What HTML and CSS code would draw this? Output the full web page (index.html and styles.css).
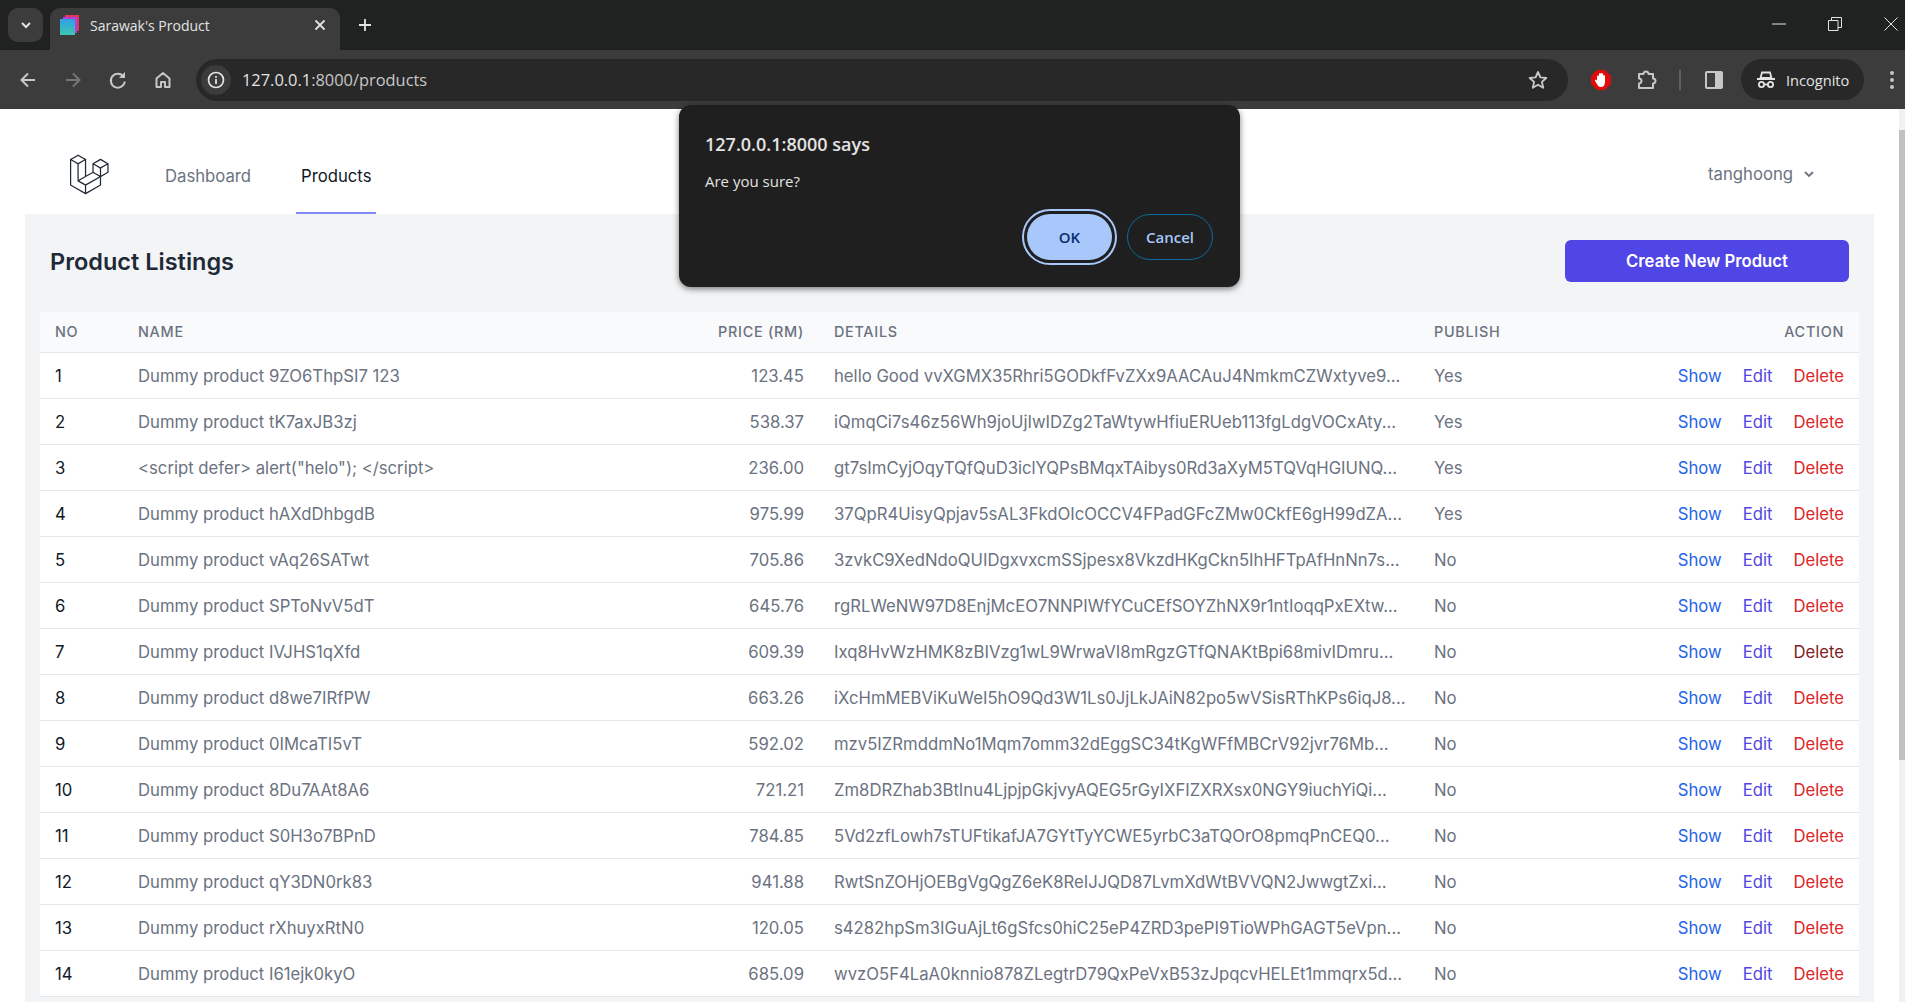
FILE: index.html
```html
<!DOCTYPE html>
<html lang="en">
<head>
    <meta charset="UTF-8">
    <meta name="viewport" content="width=device-width, initial-scale=1.0">
    <title>Sarawak's Product</title>
    <link rel="stylesheet" href="styles.css">
</head>
<body>

<div class="tabstrip">
    <div class="tab-search">
        <svg width="14" height="14" viewBox="0 0 14 14"><path d="M3 5l4 4 4-4" fill="none" stroke="#e3e3e3" stroke-width="2"/></svg>
    </div>
    <div class="tab">
        <svg class="favicon" width="20" height="20" viewBox="0 0 20 20">
            <defs><linearGradient id="favfront" x1="0" y1="0" x2="0" y2="1"><stop offset="0" stop-color="#2f9fe8"/><stop offset="1" stop-color="#3cc8b0"/></linearGradient></defs>
            <rect x="5" y="0" width="14" height="16" fill="#e0355f"/>
            <rect x="3" y="2" width="14" height="16" fill="#b43fd6"/>
            <rect x="0" y="4" width="15" height="16" fill="url(#favfront)"/>
        </svg>
        <span class="tab-title">Sarawak's Product</span>
        <svg class="tab-close" width="12" height="12" viewBox="0 0 12 12"><path d="M1.5 1.5l9 9M10.5 1.5l-9 9" stroke="#e3e3e3" stroke-width="1.8"/></svg>
    </div>
    <svg class="new-tab" width="14" height="14" viewBox="0 0 14 14"><path d="M7 1v12M1 7h12" stroke="#e3e3e3" stroke-width="1.8"/></svg>
    <div class="window-controls">
        <svg width="14" height="14" viewBox="0 0 14 14"><path d="M0 7h14" stroke="#e3e3e3"/></svg>
        <svg width="14" height="14" viewBox="0 0 14 14"><path d="M.5 3.5h9.5v10H.5zM3.5 3.5v-3h10v10h-3.5" fill="none" stroke="#e3e3e3"/></svg>
        <svg width="14" height="14" viewBox="0 0 14 14"><path d="M.5.5l13 13M13.5.5l-13 13" stroke="#e3e3e3"/></svg>
    </div>
</div>

<div class="toolbar">
    <svg class="tool" width="20" height="20" viewBox="0 0 20 20"><path d="M17 10H4M10 3.500l-6.500 6.500 6.500 6.500" fill="none" stroke="#c7c7c7" stroke-width="2"/></svg>
    <svg class="tool" width="20" height="20" viewBox="0 0 20 20"><path d="M3 10h13M10 3.500l6.500 6.500-6.500 6.500" fill="none" stroke="#757575" stroke-width="2"/></svg>
    <svg class="tool" width="20" height="20" viewBox="0 0 20 20"><path d="M15.500 6.500a7 7 0 1 0 1.300 5" fill="none" stroke="#c7c7c7" stroke-width="2"/><path d="M17 2v6h-6z" fill="#c7c7c7"/></svg>
    <svg class="tool" width="20" height="20" viewBox="0 0 20 20"><path d="M10 3L3.500 8.500V17h4.500v-5h4v5h4.500V8.500z" fill="none" stroke="#c7c7c7" stroke-width="2" stroke-linejoin="round"/></svg>
    <div class="omnibox">
        <div class="site-info">
            <svg width="18" height="18" viewBox="0 0 18 18"><circle cx="9" cy="9" r="7.500" fill="none" stroke="#e3e3e3" stroke-width="1.700"/><path d="M9 8v5M9 5v1.700" stroke="#e3e3e3" stroke-width="1.800"/></svg>
        </div>
        <span class="url"><span class="url-host">127.0.0.1</span>:8000/products</span>
        <svg class="star" width="22" height="22" viewBox="0 0 22 22"><path d="M11 3l2.400 5.400 5.900.6-4.400 3.900 1.300 5.800L11 15.700l-5.200 3 1.300-5.800L2.700 9l5.900-.6z" fill="none" stroke="#c7c7c7" stroke-width="1.900" stroke-linejoin="round"/></svg>
    </div>
    <svg class="adblock" width="22" height="22" viewBox="0 0 22 22">
        <path d="M7 1h8l6 6v8l-6 6H7l-6-6V7z" fill="#e00b0b"/>
        <path d="M7 11V7.500a1 1 0 0 1 2 0V5a1 1 0 0 1 2 0v0a1 1 0 0 1 2 0v2a1 1 0 0 1 2 0v6c0 3-1.500 5-4 5s-3-1-4-3l-2-3c-.5-1 1-1.800 2-.5z" fill="#fff"/>
    </svg>
    <svg class="puzzle" width="24" height="24" viewBox="0 0 24 24"><path d="M4 6h4.500a2.500 2.500 0 0 1 5 0H18v4.500a2.500 2.500 0 0 1 0 5V20H4v-4.500a2 2 0 0 0 0-5z" fill="none" stroke="#c7c7c7" stroke-width="2" stroke-linejoin="round"/></svg>
    <span class="tool-sep"></span>
    <svg class="panel" width="18" height="18" viewBox="0 0 18 18"><rect width="18" height="18" rx="2" fill="#c7c7c7"/><rect x="2" y="2" width="8" height="14" fill="#3c3c3c"/></svg>
    <div class="incognito">
        <svg width="20" height="20" viewBox="0 0 20 20"><path d="M6 2.500h8l1.500 5.500h-11zM1 9h18" fill="none" stroke="#e3e3e3" stroke-width="1.800"/><circle cx="5.500" cy="14.500" r="2.600" fill="none" stroke="#e3e3e3" stroke-width="1.800"/><circle cx="14.500" cy="14.500" r="2.600" fill="none" stroke="#e3e3e3" stroke-width="1.800"/><path d="M8 14.500h4" stroke="#e3e3e3" stroke-width="1.800"/></svg>
        <span>Incognito</span>
    </div>
    <svg class="menu-dots" width="6" height="20" viewBox="0 0 6 20"><circle cx="3" cy="3" r="2" fill="#c7c7c7"/><circle cx="3" cy="10" r="2" fill="#c7c7c7"/><circle cx="3" cy="17" r="2" fill="#c7c7c7"/></svg>
</div>

<div class="viewport">
    <div class="page">
        <nav class="nav">
            <svg class="logo" width="45" height="45" viewBox="0 0 316 316" fill="#1f2937"><path d="M305.8 81.125C305.77 80.995 305.69 80.885 305.65 80.755C305.56 80.525 305.49 80.285 305.37 80.075C305.29 79.935 305.17 79.815 305.07 79.685C304.94 79.515 304.83 79.325 304.68 79.175C304.55 79.045 304.39 78.955 304.25 78.845C304.09 78.715 303.95 78.575 303.77 78.475L251.32 48.275C249.97 47.495 248.31 47.495 246.96 48.275L194.51 78.475C194.33 78.575 194.19 78.725 194.03 78.845C193.89 78.955 193.73 79.045 193.6 79.175C193.45 79.325 193.34 79.515 193.21 79.685C193.11 79.815 192.99 79.935 192.91 80.075C192.79 80.285 192.71 80.525 192.63 80.755C192.58 80.875 192.51 80.995 192.48 81.125C192.38 81.495 192.33 81.875 192.33 82.265V139.625L148.62 164.795V52.575C148.62 52.185 148.57 51.805 148.47 51.435C148.44 51.305 148.36 51.195 148.32 51.065C148.23 50.835 148.16 50.595 148.04 50.385C147.96 50.245 147.84 50.125 147.74 49.995C147.61 49.825 147.5 49.635 147.35 49.485C147.22 49.355 147.06 49.265 146.92 49.155C146.76 49.025 146.62 48.885 146.44 48.785L93.99 18.585C92.64 17.805 90.98 17.805 89.63 18.585L37.18 48.785C37 48.885 36.86 49.035 36.7 49.155C36.56 49.265 36.4 49.355 36.27 49.485C36.12 49.635 36.01 49.825 35.88 49.995C35.78 50.125 35.66 50.245 35.58 50.385C35.46 50.595 35.38 50.835 35.3 51.065C35.25 51.185 35.18 51.305 35.15 51.435C35.05 51.805 35 52.185 35 52.575V232.235C35 233.795 35.84 235.245 37.19 236.025L142.1 296.425C142.33 296.555 142.58 296.635 142.83 296.725C142.95 296.765 143.06 296.835 143.18 296.865C143.55 296.965 143.93 297.015 144.31 297.015C144.69 297.015 145.07 296.965 145.44 296.865C145.55 296.835 145.65 296.775 145.76 296.735C146.02 296.645 146.28 296.565 146.52 296.425L251.43 236.025C252.79 235.245 253.62 233.805 253.62 232.235V174.875L303.86 145.945C305.22 145.165 306.05 143.725 306.05 142.155V82.265C305.95 81.875 305.89 81.495 305.8 81.125ZM144.2 227.205L100.57 202.515L146.39 176.135L196.66 147.195L240.33 172.335L208.29 190.625L144.2 227.205ZM244.75 114.995V164.795L226.39 154.225L201.03 139.625V89.825L219.39 100.395L244.75 114.995ZM249.12 57.105L292.81 82.265L249.12 107.425L205.43 82.265L249.12 57.105ZM114.49 184.425L96.13 194.995V85.305L121.49 70.705L139.85 60.135V169.815L114.49 184.425ZM91.76 27.425L135.45 52.585L91.76 77.745L48.07 52.585L91.76 27.425ZM43.67 60.135L62.03 70.705L87.39 85.305V202.545V202.555V202.565C87.39 202.735 87.44 202.895 87.46 203.055C87.49 203.265 87.49 203.485 87.55 203.695V203.705C87.6 203.875 87.69 204.035 87.76 204.195C87.84 204.375 87.89 204.575 87.99 204.745C87.99 204.745 87.99 204.755 88 204.755C88.09 204.905 88.22 205.035 88.33 205.175C88.45 205.335 88.55 205.495 88.69 205.635L88.7 205.645C88.82 205.765 88.98 205.855 89.12 205.965C89.28 206.085 89.42 206.225 89.59 206.325C89.6 206.325 89.6 206.325 89.61 206.335C89.62 206.335 89.62 206.345 89.63 206.345L139.87 234.775V285.065L43.67 229.705V60.135ZM244.75 229.705L148.58 285.075V234.775L219.8 194.115L244.75 179.875V229.705ZM297.2 139.625L253.49 164.795V114.995L278.85 100.395L297.21 89.825V139.625H297.2Z"/></svg>
            <a class="nav-link">Dashboard</a>
            <a class="nav-link active">Products</a>
            <div class="user-menu">
                <span>tanghoong</span>
                <svg width="16" height="16" viewBox="0 0 16 16"><path d="M4 6l4 4 4-4" fill="none" stroke="#6b7280" stroke-width="1.800"/></svg>
            </div>
        </nav>

        <main class="content">
            <div class="content-head">
                <h1>Product Listings</h1>
                <a class="btn-create">Create New Product</a>
            </div>

            <table class="products">
                <colgroup>
                    <col class="col-no"><col class="col-name"><col class="col-price"><col class="col-details"><col class="col-publish"><col class="col-action">
                </colgroup>
                <thead>
                    <tr><th>No</th><th>Name</th><th class="right">Price (RM)</th><th>Details</th><th>Publish</th><th class="right">Action</th></tr>
                </thead>
                <tbody>
                    <tr><td class="no">1</td><td>Dummy product 9ZO6ThpSI7 123</td><td class="right">123.45</td><td>hello Good vvXGMX35Rhri5GODkfFvZXx9AACAuJ4NmkmCZWxtyve9...</td><td>Yes</td><td class="actions"><a class="show">Show</a><a class="edit">Edit</a><a class="delete">Delete</a></td></tr>
                    <tr><td class="no">2</td><td>Dummy product tK7axJB3zj</td><td class="right">538.37</td><td>iQmqCi7s46z56Wh9joUjIwIDZg2TaWtywHfiuERUeb113fgLdgVOCxAty...</td><td>Yes</td><td class="actions"><a class="show">Show</a><a class="edit">Edit</a><a class="delete">Delete</a></td></tr>
                    <tr><td class="no">3</td><td>&lt;script defer&gt; alert("helo"); &lt;/script&gt;</td><td class="right">236.00</td><td>gt7sImCyjOqyTQfQuD3iclYQPsBMqxTAibys0Rd3aXyM5TQVqHGIUNQ...</td><td>Yes</td><td class="actions"><a class="show">Show</a><a class="edit">Edit</a><a class="delete">Delete</a></td></tr>
                    <tr><td class="no">4</td><td>Dummy product hAXdDhbgdB</td><td class="right">975.99</td><td>37QpR4UisyQpjav5sAL3FkdOIcOCCV4FPadGFcZMw0CkfE6gH99dZA...</td><td>Yes</td><td class="actions"><a class="show">Show</a><a class="edit">Edit</a><a class="delete">Delete</a></td></tr>
                    <tr><td class="no">5</td><td>Dummy product vAq26SATwt</td><td class="right">705.86</td><td>3zvkC9XedNdoQUIDgxvxcmSSjpesx8VkzdHKgCkn5IhHFTpAfHnNn7s...</td><td>No</td><td class="actions"><a class="show">Show</a><a class="edit">Edit</a><a class="delete">Delete</a></td></tr>
                    <tr><td class="no">6</td><td>Dummy product SPToNvV5dT</td><td class="right">645.76</td><td>rgRLWeNW97D8EnjMcEO7NNPIWfYCuCEfSOYZhNX9r1ntIoqqPxEXtw...</td><td>No</td><td class="actions"><a class="show">Show</a><a class="edit">Edit</a><a class="delete">Delete</a></td></tr>
                    <tr><td class="no">7</td><td>Dummy product IVJHS1qXfd</td><td class="right">609.39</td><td>Ixq8HvWzHMK8zBIVzg1wL9WrwaVI8mRgzGTfQNAKtBpi68mivIDmru...</td><td>No</td><td class="actions"><a class="show">Show</a><a class="edit">Edit</a><a class="delete hover">Delete</a></td></tr>
                    <tr><td class="no">8</td><td>Dummy product d8we7IRfPW</td><td class="right">663.26</td><td>iXcHmMEBViKuWeI5hO9Qd3W1Ls0JjLkJAiN82po5wVSisRThKPs6iqJ8...</td><td>No</td><td class="actions"><a class="show">Show</a><a class="edit">Edit</a><a class="delete">Delete</a></td></tr>
                    <tr><td class="no">9</td><td>Dummy product 0IMcaTI5vT</td><td class="right">592.02</td><td>mzv5IZRmddmNo1Mqm7omm32dEggSC34tKgWFfMBCrV92jvr76Mb...</td><td>No</td><td class="actions"><a class="show">Show</a><a class="edit">Edit</a><a class="delete">Delete</a></td></tr>
                    <tr><td class="no">10</td><td>Dummy product 8Du7AAt8A6</td><td class="right">721.21</td><td>Zm8DRZhab3BtInu4LjpjpGkjvyAQEG5rGyIXFIZXRXsx0NGY9iuchYiQi...</td><td>No</td><td class="actions"><a class="show">Show</a><a class="edit">Edit</a><a class="delete">Delete</a></td></tr>
                    <tr><td class="no">11</td><td>Dummy product S0H3o7BPnD</td><td class="right">784.85</td><td>5Vd2zfLowh7sTUFtikafJA7GYtTyYCWE5yrbC3aTQOrO8pmqPnCEQ0...</td><td>No</td><td class="actions"><a class="show">Show</a><a class="edit">Edit</a><a class="delete">Delete</a></td></tr>
                    <tr><td class="no">12</td><td>Dummy product qY3DN0rk83</td><td class="right">941.88</td><td>RwtSnZOHjOEBgVgQgZ6eK8ReIJJQD87LvmXdWtBVVQN2JwwgtZxi...</td><td>No</td><td class="actions"><a class="show">Show</a><a class="edit">Edit</a><a class="delete">Delete</a></td></tr>
                    <tr><td class="no">13</td><td>Dummy product rXhuyxRtN0</td><td class="right">120.05</td><td>s4282hpSm3IGuAjLt6gSfcs0hiC25eP4ZRD3pePI9TioWPhGAGT5eVpn...</td><td>No</td><td class="actions"><a class="show">Show</a><a class="edit">Edit</a><a class="delete">Delete</a></td></tr>
                    <tr><td class="no">14</td><td>Dummy product I61ejk0kyO</td><td class="right">685.09</td><td>wvzO5F4LaA0knnio878ZLegtrD79QxPeVxB53zJpqcvHELEt1mmqrx5d...</td><td>No</td><td class="actions"><a class="show">Show</a><a class="edit">Edit</a><a class="delete">Delete</a></td></tr>
                </tbody>
            </table>
        </main>
    </div>
    <div class="scrollbar"><div class="scroll-thumb"></div></div>
</div>

<div class="dialog">
    <div class="dialog-title">127.0.0.1:8000 says</div>
    <div class="dialog-text">Are you sure?</div>
    <div class="dialog-buttons">
        <button class="btn-ok">OK</button>
        <button class="btn-cancel">Cancel</button>
    </div>
</div>

</body>
</html>
```

FILE: styles.css
```css
* {
    box-sizing: border-box;
}
html, body {
    height: 100%;
}
body {
    margin: 0;
    height: 100vh;
    overflow: hidden;
    display: flex;
    flex-direction: column;
    font-family: "Open Sans", "Noto Sans", sans-serif;
    background: #fff;
}

/* browser chrome */
.tabstrip {
    height: 50px;
    flex: none;
    display: flex;
    align-items: flex-end;
    background: #202222;
    padding-left: 8px;
}
.tab-search {
    width: 35px;
    height: 34px;
    margin-bottom: 8px;
    border-radius: 10px;
    background: #3c3c3c;
    display: flex;
    align-items: center;
    justify-content: center;
}
.tab {
    width: 290px;
    height: 42px;
    margin-left: 7px;
    padding: 0 14px 8px 10px;
    background: #3c3c3c;
    border-radius: 10px 10px 0 0;
    display: flex;
    align-items: center;
}
.tab-title {
    margin-left: 10px;
    flex: 1;
    color: #e3e3e3;
    font-size: 14px;
}
.new-tab {
    margin: 0 0 18px 18px;
}
.window-controls {
    margin-left: auto;
    align-self: flex-start;
    margin-top: 17px;
    display: flex;
    gap: 42px;
    padding-right: 7px;
}
.toolbar {
    height: 59px;
    flex: none;
    display: flex;
    align-items: center;
    background: #3c3c3c;
    padding-left: 18px;
}
.tool {
    margin-right: 25px;
}
.omnibox {
    width: 1372px;
    height: 42px;
    margin-left: -2px;
    background: #282828;
    border-radius: 21px;
    display: flex;
    align-items: center;
    padding: 0 19px 0 5px;
}
.site-info {
    width: 30px;
    height: 30px;
    border-radius: 50%;
    background: #3c3c3c;
    display: flex;
    align-items: center;
    justify-content: center;
}
.url {
    margin-left: 11px;
    flex: 1;
    font-size: 16.4px;
    color: #c7c7c7;
}
.url-host {
    color: #e3e3e3;
}
.adblock {
    margin-left: 22px;
}
.puzzle {
    margin-left: 23px;
}
.tool-sep {
    width: 2px;
    height: 20px;
    margin-left: 20px;
    background: #5f5f5f;
}
.panel {
    margin-left: 24px;
}
.incognito {
    width: 123px;
    height: 41px;
    margin-left: 18px;
    border-radius: 21px;
    background: #282828;
    color: #e3e3e3;
    font-size: 14.6px;
    display: flex;
    align-items: center;
    gap: 10px;
    padding-left: 15px;
}
.menu-dots {
    margin-left: 25px;
}

/* page */
.viewport {
    flex: 1;
    min-height: 0;
    display: flex;
    font-family: Inter, "Open Sans", sans-serif;
}
.page {
    flex: 1;
    min-width: 0;
    overflow: hidden;
    padding: 0 25px;
}
.scrollbar {
    width: 6px;
    flex: none;
    background: #f1f1f1;
    padding-top: 21px;
}
.scroll-thumb {
    height: 630px;
    background: #c1c1c1;
}
.nav {
    height: 105px;
    display: flex;
    align-items: stretch;
    padding: 30px 0 0 40px;
}
.logo {
    align-self: center;
    margin-right: 50px;
    margin-top: -4px;
}
.nav-link {
    display: flex;
    align-items: center;
    padding: 0 5px;
    margin-right: 40px;
    font-size: 16.7px;
    color: #6b7280;
    border-bottom: 2px solid transparent;
}
.nav-link.active {
    color: #111827;
    border-bottom-color: #818cf8;
}
.user-menu {
    margin-left: auto;
    margin-right: 57px;
    margin-top: -6px;
    display: flex;
    align-items: center;
    gap: 8px;
    font-size: 16.7px;
    color: #6b7280;
}
.content {
    background: #f3f4f6;
    padding: 26px 15px 0;
    min-height: 900px;
}
.content-head {
    display: flex;
    align-items: center;
    justify-content: space-between;
    padding: 0 10px;
    margin-bottom: 30px;
}
h1 {
    margin: 0;
    font-size: 23.5px;
    font-weight: 600;
    color: #1f2937;
}
.btn-create {
    width: 284px;
    height: 42px;
    display: flex;
    align-items: center;
    justify-content: center;
    background: #4f46e5;
    border-radius: 6px;
    color: #fff;
    font-size: 16.7px;
    font-weight: 600;
}

/* table */
.products {
    width: 1819px;
    table-layout: fixed;
    border-collapse: collapse;
    background: #fff;
    font-size: 16.7px;
    color: #6b7280;
}
.col-no { width: 83px; }
.col-name { width: 320px; }
.col-price { width: 376px; }
.col-details { width: 600px; }
.col-publish { width: 200px; }
.products th {
    height: 40px;
    padding: 0 15px;
    background: #f9fafb;
    text-align: left;
    font-size: 14.4px;
    font-weight: 500;
    text-transform: uppercase;
    letter-spacing: 0.05em;
    color: #6b7280;
    border-bottom: 1px solid #e5e7eb;
}
.products td {
    height: 46px;
    padding: 2px 15px 0;
    white-space: nowrap;
    overflow: hidden;
    border-bottom: 1px solid #e5e7eb;
}
.products .right {
    text-align: right;
}
.products .no {
    color: #111827;
}
.products .actions {
    text-align: right;
}
.actions a {
    margin-left: 21px;
}
.show {
    color: #2563eb;
}
.edit {
    color: #4f46e5;
}
.delete {
    color: #dc2626;
}
.delete.hover {
    color: #7f1d1d;
}

/* javascript confirm box */
.dialog {
    position: absolute;
    left: 679px;
    top: 105px;
    width: 561px;
    height: 182px;
    padding: 26px 27px 0 26px;
    background: #1f1f1f;
    border-radius: 12px;
    box-shadow: 0 2px 6px rgba(0,0,0,0.5);
    color: #e3e3e3;
}
.dialog-title {
    font-size: 18px;
    font-weight: 600;
    line-height: 26px;
}
.dialog-text {
    margin-top: 14px;
    font-size: 15px;
    line-height: 20px;
}
.dialog-buttons {
    margin-top: 23px;
    display: flex;
    justify-content: flex-end;
    align-items: center;
    gap: 9px;
}
.dialog-buttons button {
    height: 46px;
    border-radius: 23px;
    font-family: "Open Sans", "Noto Sans", sans-serif;
    font-size: 15px;
    font-weight: 600;
}
.btn-ok {
    width: 85px;
    margin-right: 6px;
    border: none;
    background: #a8c7fa;
    color: #062e6f;
    outline: 2px solid #a8c7fa;
    outline-offset: 3px;
}
.btn-cancel {
    width: 86px;
    border: 1px solid #0b6b9e;
    background: transparent;
    color: #a8c7fa;
}
```
